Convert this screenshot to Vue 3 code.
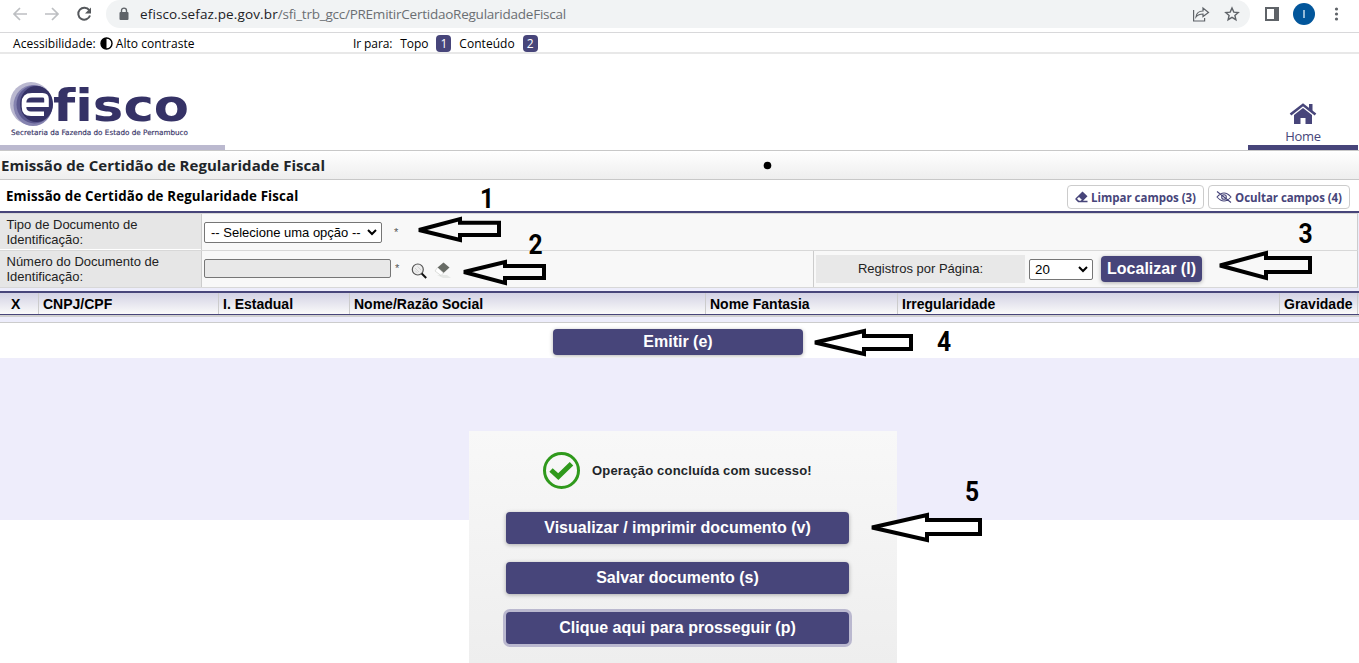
<script setup>
const columns = [
  { title: 'X', width: 39, cls: 'first' },
  { title: 'CNPJ/CPF', width: 180 },
  { title: 'I. Estadual', width: 131 },
  { title: 'Nome/Razão Social', width: 356 },
  { title: 'Nome Fantasia', width: 192 },
  { title: 'Irregularidade', width: 382 },
  { title: 'Gravidade', width: 78 },
]

const arrow = (tip, y, head, right, top, bottom, shaftTop, shaftBottom) =>
  `${tip + 1},${y} ${head - 2},${top + 3} ${head - 2},${shaftTop + 2} ${right - 2},${shaftTop + 2} ${right - 2},${shaftBottom - 2} ${head - 2},${shaftBottom - 2} ${head - 2},${bottom - 3}`

const arrows = [
  { points: arrow(418, 230, 462, 501, 216, 243, 220.7, 237), fill: 'none' },
  { points: arrow(463, 272, 507, 546, 259, 286, 264, 280), fill: 'none' },
  { points: arrow(1219, 265.5, 1268, 1312, 250, 281, 256, 274), fill: 'none' },
  { points: arrow(814, 342.5, 866, 913, 328, 357, 334, 351), fill: 'none' },
  { points: arrow(871, 527.5, 929, 982, 512, 543, 518, 536), fill: '#fff' },
]

const digits = [
  { n: 1, x: 487, y: 208 },
  { n: 2, x: 535.500, y: 254 },
  { n: 3, x: 1305.500, y: 243 },
  { n: 4, x: 944, y: 351 },
  { n: 5, x: 972, y: 501 },
]
</script>

<template>
  <div class="screen">
    <div class="browser">
      <svg class="nav" width="100" height="28" fill="none" stroke-width="1.7">
        <path d="M27 14H14M20 8l-6 6 6 6M45 14h13M52 8l6 6-6 6" stroke="#bdbfc2" />
        <path d="M89.2 10.2A6 6 0 1 0 90 15.5" stroke="#55585c" stroke-width="2" />
        <path d="M91 7.5v6h-6z" fill="#55585c" />
      </svg>
      <div class="address">
        <svg class="lock" width="10" height="14" viewBox="0 0 10 14">
          <rect x="0.5" y="5" width="9" height="8" rx="1" fill="#5f6368" />
          <path d="M2.5 6V3.6a2.5 2.5 0 0 1 5 0V6" fill="none" stroke="#5f6368" stroke-width="1.4" />
        </svg>
        <span class="url"><b>efisco.sefaz.pe.gov.br</b>/sfi_trb_gcc/PREmitirCertidaoRegularidadeFiscal</span>
        <svg class="page-actions" width="52" height="20" fill="none" stroke="#5f6368" stroke-width="1.2">
          <path d="M1.600 6v11h11v-3M4 13c.5-4 3-6 7-6V4l5.500 4.500-5.500 4V10c-3 0-5 .5-7 3z" />
          <path d="M40 4l1.800 4.100 4.400.4-3.300 2.900 1 4.300L40 13.400l-3.900 2.300 1-4.300-3.300-2.900 4.400-.4z" stroke-width="1.4" />
        </svg>
      </div>
      <svg class="browser-actions" width="96" height="28">
        <path d="M4 7h14v14H4z" fill="#5f6368" /><path d="M6 9h7v10H6z" fill="#fff" />
        <circle cx="43" cy="14" r="11" fill="#02569b" />
        <path d="M43 10v8" stroke="#d5e5f2" stroke-width="1.400" />
        <g fill="#5f6368"><circle cx="75.500" cy="9" r="1.600" /><circle cx="75.500" cy="14" r="1.600" /><circle cx="75.500" cy="19" r="1.600" /></g>
      </svg>
    </div>

    <div class="access">
      <div class="contrast">
        <span class="t-acc">Acessibilidade:</span>
        <svg width="13" height="13" viewBox="0 0 13 13"><circle cx="6.500" cy="6.500" r="5.500" fill="#fff" stroke="#000" stroke-width="1.400" /><path d="M6.500 1a5.500 5.500 0 0 0 0 11z" /></svg>
        <span class="t-alt">Alto contraste</span>
      </div>
      <div class="jump"><span class="t-ir">Ir para:</span><span class="t-top">Topo</span><i>1</i><span class="t-con">Conteúdo</span><i>2</i></div>
    </div>

    <header class="header">
      <div class="brand">
        <svg width="225" height="91" viewBox="0 54 225 91">
          <ellipse cx="31" cy="103.500" rx="21" ry="21.500" fill="#bab8d0" />
          <ellipse cx="33" cy="105.500" rx="19.500" ry="20.500" fill="#8583b0" />
          <ellipse cx="34.500" cy="104.500" rx="18" ry="19" fill="#5c598f" />
          <ellipse cx="36.500" cy="104" rx="16.500" ry="18" fill="#353266" />
          <path d="M24 104.800H46.500V99q0-3.700-4-3.700H32q-8 0-8 7.500v4q0 7 7 7h13" fill="none" stroke="#fff" stroke-width="4.600" />
          <text x="53" y="121" class="logo-text" textLength="136" lengthAdjust="spacingAndGlyphs">fisco</text>
          <text x="11" y="134.500" class="logo-sub" textLength="177" lengthAdjust="spacingAndGlyphs">Secretaria da Fazenda do Estado de Pernambuco</text>
        </svg>
      </div>
      <div class="home">
        <svg width="28" height="24" viewBox="0 0 28 24">
          <path d="M1.500 12.500 14 2.800l12.500 9.700" fill="none" stroke="#47457a" stroke-width="2.600" />
          <path d="M20 2h3.500v8L20 7zM5 13l9-7 9 7v9h-6.500v-6h-5v6H5z" fill="#47457a" />
        </svg>
        <span>Home</span>
      </div>
    </header>

    <div class="page-title"><span>Emissão de Certidão de Regularidade Fiscal</span></div>
    <div class="panel-title">
      <h2>Emissão de Certidão de Regularidade Fiscal</h2>
      <button class="tool t-limpar">
        <svg width="13" height="12" viewBox="0 0 13 12"><path d="M7.500 .5 12.500 5.200 8 9.800H12.500v1.400H3.200L.4 8.400v-1z" fill="#47457a" /><path d="M2 7.700 4 5.900 6.800 8.700 5.700 9.800H4z" fill="#fff" /></svg>
        <span>Limpar campos (3)</span>
      </button>
      <button class="tool t-ocultar">
        <svg width="16" height="12" viewBox="0 0 16 12" fill="none" stroke="#47457a" stroke-width="1.100"><path d="M1 6q7-8 14 0-7 8-14 0zM1 .5l14 11" /><circle cx="8" cy="6" r="2.300" /></svg>
        <span>Ocultar campos (4)</span>
      </button>
    </div>

    <div class="form">
      <div class="form-row r1">
        <label>Tipo de Documento de<br />Identificação:</label>
        <div class="field">
          <div class="select wide"><span>-- Selecione uma opção --</span><svg width="10" height="7"><path d="M1 1l4 4 4-4" /></svg></div>
          <span class="star s1">*</span>
        </div>
      </div>
      <div class="form-row r2">
        <label>Número do Documento de<br />Identificação:</label>
        <div class="field">
          <div class="input"></div>
          <span class="star s2">*</span>
          <svg class="tools" width="42" height="18" viewBox="0 0 42 18">
            <circle cx="6.800" cy="7.500" r="5.500" fill="#eee" stroke="#555" stroke-width="1.200" /><path d="M4 6l4 4M4 8.500l2.500 2.500M6.500 4.500l3.500 3.500" stroke="#ccc" stroke-width=".8" /><path d="M10.700 11.500l4.500 4.500" stroke="#111" stroke-width="2" />
            <path d="M26 13l6 3h8l-4-3z" fill="#e5e7e5" /><path d="M32.500 .5l6 5-6 5.500-6-5.500z" fill="#676b65" /><path d="M26.500 5.500l6 5.500-2.500 2.500-6-4.500z" fill="#fff" stroke="#c7c9c6" stroke-width=".6" />
          </svg>
        </div>
        <div class="paging">
          <div class="paging-label"><span>Registros por Página:</span></div>
          <div class="select small"><span>20</span><svg width="10" height="7"><path d="M1 1l4 4 4-4" /></svg></div>
          <button class="btn find"><span>Localizar (l)</span></button>
        </div>
      </div>
    </div>

    <div class="grid-head">
      <div v-for="c in columns" :key="c.title" :class="c.cls" :style="{ width: c.width + 'px' }">{{ c.title }}</div>
    </div>
    <div class="grid-foot"></div>
    <div class="emit"><button class="btn"><span>Emitir (e)</span></button></div>
    <div class="backdrop"></div>

    <section class="dialog">
      <div class="message">
        <svg width="38" height="38" viewBox="0 0 38 38" fill="none" stroke="#2f991c"><circle cx="18.500" cy="18.500" r="17" stroke-width="3" /><path d="M8 18l7.300 6.500L28.500 11.700" stroke-width="5" /></svg>
        <span>Operação concluída com sucesso!</span>
      </div>
      <button class="btn b1"><span>Visualizar / imprimir documento (v)</span></button>
      <button class="btn b2"><span>Salvar documento (s)</span></button>
      <button class="btn b3 focused"><span>Clique aqui para prosseguir (p)</span></button>
    </section>

    <svg class="notes" width="1359" height="663">
      <circle cx="767.500" cy="165.500" r="3.800" />
      <polygon v-for="a in arrows" :key="a.points" :points="a.points" :fill="a.fill" stroke="#000" stroke-width="4" stroke-miterlimit="2.500" />
      <text v-for="d in digits" :key="d.n" text-anchor="middle" :transform="`translate(${d.x} ${d.y}) scale(.88 1)`">{{ d.n }}</text>
    </svg>
  </div>
</template>

<style>
body { background: #fff; overflow: hidden; }
</style>

<style scoped>
* { box-sizing: border-box; }
.screen { position: relative; width: 1359px; height: 663px; overflow: hidden; background: #fff; font-family: "Liberation Sans", Arial, sans-serif; color: #000; white-space: nowrap; }
button { font: inherit; margin: 0; padding: 0; border: 0; }
.browser { height: 33px; border-bottom: 1px solid #d8d8da; display: flex; align-items: flex-start; }
.nav { width: 100px; margin-right: 6px; }
.address { width: 1144px; height: 28px; background: #f1f3f4; border-radius: 14px; display: flex; align-items: center; padding: 0 6px 0 13px; }
.url { margin-left: 11px; font: 13.5px "Open Sans", "Noto Sans", sans-serif; letter-spacing: -.24px; color: #6b6f73; flex: 1; }
.url b { font-weight: 400; color: #202124; letter-spacing: .13px; }
.browser-actions { margin-left: 11px; }
.access { height: 21px; border-bottom: 2px solid #e8e8e8; display: flex; align-items: center; font: 12px "Open Sans", "Noto Sans", sans-serif; padding: 1px 0 0 13px; }
.contrast { width: 340px; display: flex; align-items: center; }
.contrast svg { margin: 0 3px 0 4px; }
.t-acc, .t-alt { letter-spacing: .04px; }
.jump { display: flex; align-items: center; }
.jump i { width: 15px; height: 17px; background: #47457a; color: #fff; border-radius: 4px; font-style: normal; text-align: center; line-height: 17px; margin: 0 8px; }
.t-ir { margin-right: 8px; }
.t-top, .t-ir { letter-spacing: -.1px; }
.t-con { letter-spacing: .05px; }
.header { height: 96px; display: flex; justify-content: space-between; }
.brand { width: 225px; border-bottom: 5px solid #bbb9cf; height: 96px; }
.brand svg { display: block; }
.logo-text { font: bold 45px "DejaVu Sans", sans-serif; fill: #353266; font-variant-ligatures: none; }
.logo-sub { font: 7.3px "DejaVu Sans", sans-serif; fill: #353266; stroke: #353266; stroke-width: .15px; }
.home { width: 110px; margin-right: 1px; border-bottom: 5px solid #47457a; display: flex; flex-direction: column; align-items: center; padding-top: 48px; color: #47457a; font: 13px/17px "Open Sans", sans-serif; }
.home span { margin-top: 2px; letter-spacing: -.3px; }
.page-title { height: 30px; border: solid #c8c8c8; border-width: 1px 0; background: linear-gradient(#fff, #eee); font: bold 15px/28px "Open Sans", sans-serif; letter-spacing: .05px; color: #212529; padding-left: 1px; }
.panel-title { height: 31px; display: flex; align-items: center; padding: 3px 9px 0 6px; }
.panel-title h2 { margin: -2px 0 0; flex: 1; font: bold 13.3px "Open Sans", sans-serif; letter-spacing: .17px; }
.tool { height: 24px; border: 1px solid #ccc; border-radius: 4px; background: #fff; color: #47457a; font: bold 11.5px "Open Sans", sans-serif; letter-spacing: -.03px; display: flex; align-items: center; justify-content: center; gap: 3px; }
.tool span { padding-top: 1px; }
.t-limpar { width: 137px; margin-right: 4px; }
.t-ocultar { width: 142px; letter-spacing: -.06px; }
.form { height: 80px; border-top: 2px solid #47457a; background: #ededfb; }
.form-row { display: flex; border-right: 1px solid #ccc; width: 1358px; background: #f8f8f8; border-top: 1px solid #d8d8d8; }
.r1 { height: 37px; }
.r2 { height: 38px; border-bottom: 1px solid #d8d8d8; }
.form-row label { width: 201px; background: #e6e6e6; padding: 3px 0 0 6.500px; font-size: 13px; line-height: 15px; color: #222; }
.r1 label { border-bottom: 1px solid #fff; }
.field { flex: 1; border-left: 1px solid #ccc; display: flex; align-items: flex-start; padding-left: 2px; }
.select { border: 1px solid #767676; border-radius: 2px; background: #fff; height: 21px; display: flex; align-items: center; justify-content: space-between; padding: 0 4px 0 6px; }
.select svg { fill: none; stroke: #000; stroke-width: 2; }
.wide { width: 178px; margin-top: 8px; font-size: 13px; }
.star { font-size: 11px; color: #555; }
.s1 { margin: 12px 0 0 12px; }
.s2 { margin: 11px 0 0 4px; }
.input { width: 187px; height: 19px; margin-top: 8px; border: 1px solid #767676; border-radius: 2px; background: #e8e8e8; }
.tools { margin: 11px 0 0 12px; }
.paging { width: 544px; border-left: 1px solid #ccc; display: flex; padding-left: 2px; align-items: flex-start; }
.paging-label { width: 209px; height: 28px; margin-top: 4px; background: #e8e8e8; text-align: center; line-height: 28px; font-size: 13px; color: #222; }
.small { width: 64px; margin: 8px 8px 0 4px; padding-left: 5px; font-size: 13.3px; }
.btn { background: #47457a; color: #fff; border-radius: 4px; font-weight: bold; font-size: 16px; box-shadow: 0 1px 4px rgba(0,0,0,.3); display: block; }
.find { width: 101px; height: 26px; margin-top: 5px; }
.grid-head { height: 24px; display: flex; border-top: 2px solid #47457a; border-bottom: 1px solid #47457a; background: linear-gradient(#d3d2e4, #fafafa); font-weight: bold; font-size: 14px; line-height: 22px; }
.grid-head div { border-right: 1px solid #ccc; padding-left: 4px; }
.grid-head .first { padding-left: 11px; flex: none; }
.grid-foot { height: 8px; border-top: 2px solid #d0d0d0; border-bottom: 1px solid #ccc; background: #ededfb; }
.emit { height: 35px; padding: 6px 0 0 553px; }
.emit .btn { width: 250px; height: 26px; }
.backdrop { height: 162px; background: #eeedfb; }
.dialog { position: absolute; left: 469px; top: 431px; width: 428px; height: 232px; background: linear-gradient(#f8f8f8, #eee); padding: 20px 48px 0 37px; }
.message { display: flex; align-items: center; margin-left: 37px; height: 39px; margin-bottom: 22px; font-weight: bold; font-size: 13px; letter-spacing: .17px; color: #212529; }
.message span { margin-left: 11px; }
.dialog .btn { width: 343px; height: 32px; margin-bottom: 18px; }
.dialog .focused { box-shadow: 0 0 0 3px #bab8cf; }
.notes { position: absolute; left: 0; top: 0; pointer-events: none; }
.notes text { font: bold 28px Roboto, sans-serif; }
</style>
